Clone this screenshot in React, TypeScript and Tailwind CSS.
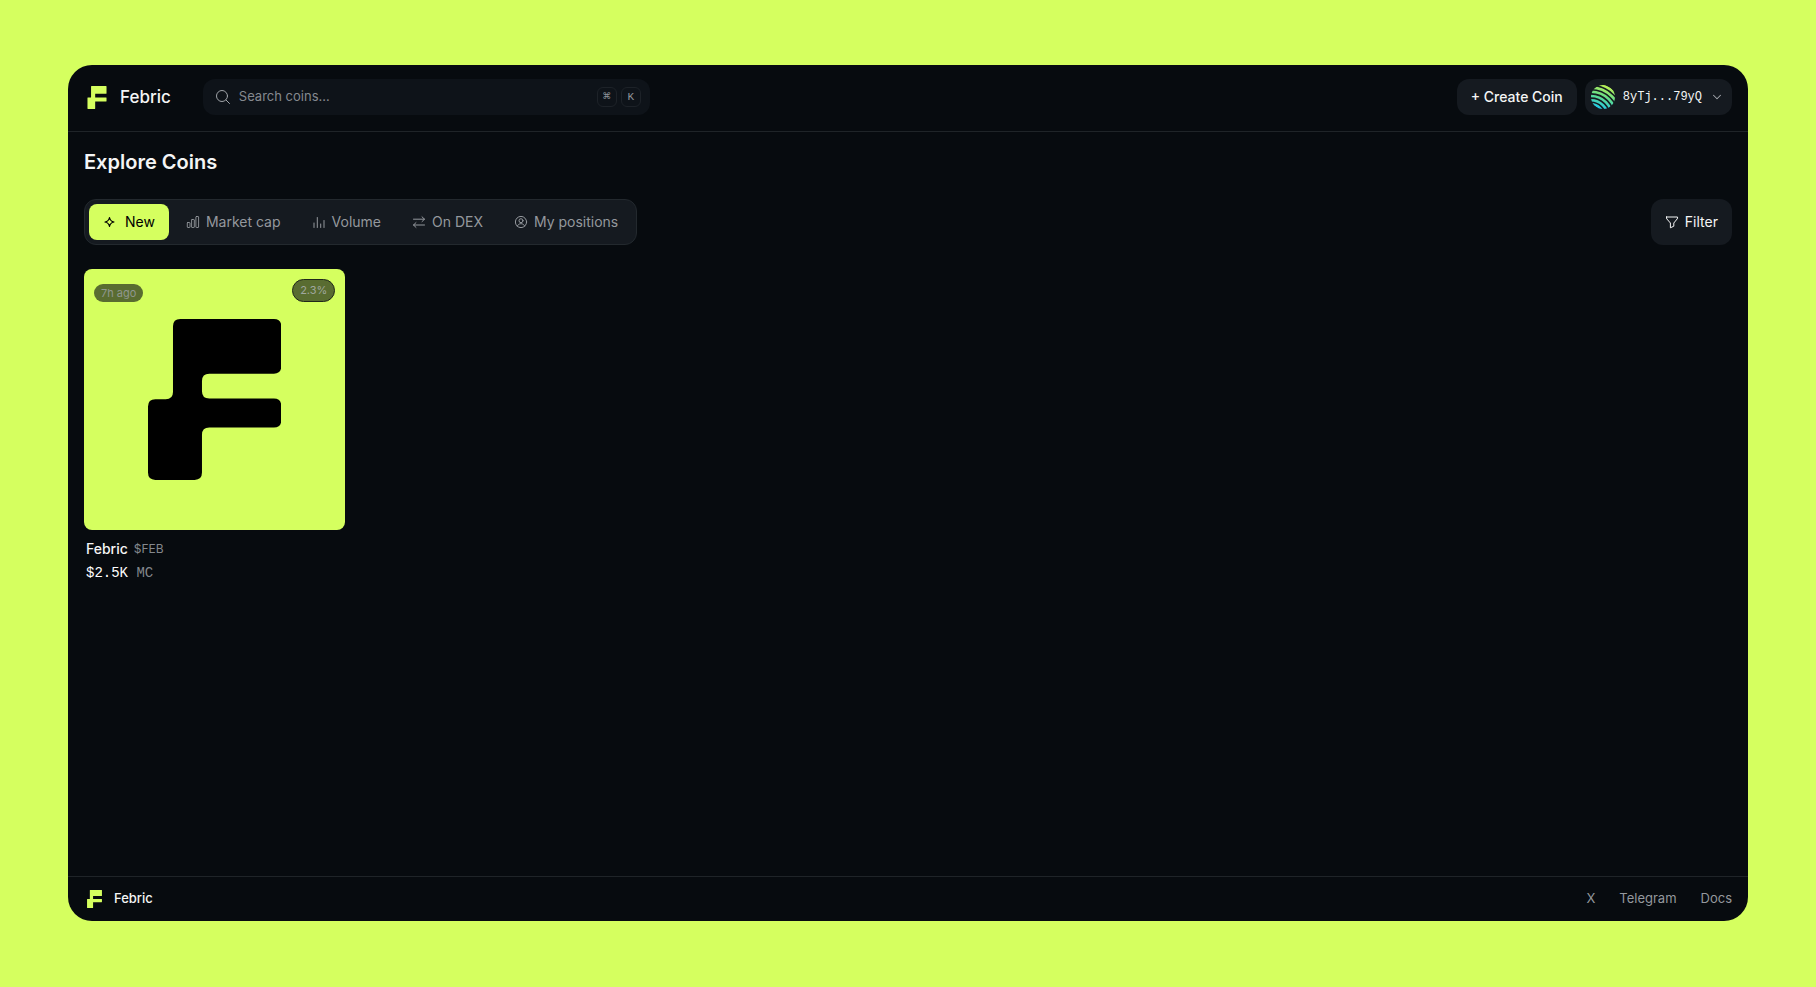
import { ReactNode } from 'react';
import { ChevronDown } from 'lucide-react';

const LOGO_PATH =
  'M97 0H378Q400 0 400 22V142Q400 164 378 164H184Q162 164 162 186V217Q162 239 184 239H378Q400 239 400 261V304Q400 326 378 326H184Q162 326 162 348V461Q162 483 140 483H22Q0 483 0 461V263Q0 241 22 241H53Q75 241 75 219V22Q75 0 97 0Z';

function Logo({ className }: { className: string }) {
  return (
    <svg viewBox="0 0 400 483" fill="currentColor" className={className} aria-hidden="true">
      <path d={LOGO_PATH} />
    </svg>
  );
}

// squarer cut of the mark for small sizes
function LogoMark({ className }: { className: string }) {
  return (
    <svg viewBox="0 0 400 483" fill="currentColor" className={className} aria-hidden="true">
      <path d="M83 0H392L400 8V156L392 164H162V239H392L400 247V318L392 326H162V475L154 483H8L0 475V249L8 241H75V8Z" />
    </svg>
  );
}

function Icon({ children }: { children: ReactNode }) {
  return (
    <svg
      viewBox="0 0 14 14"
      fill="none"
      stroke="currentColor"
      strokeLinecap="round"
      strokeLinejoin="round"
      className="h-3.5 w-3.5 shrink-0"
      aria-hidden="true"
    >
      {children}
    </svg>
  );
}

const tabs = [
  {
    label: 'New',
    icon: <path strokeWidth="1.2" d="M6.5 2.5Q7.2 6.3 11 7Q7.2 7.7 6.5 11.5Q5.8 7.7 2 7Q5.8 6.3 6.5 2.5Z" />,
  },
  {
    label: 'Market cap',
    icon: (
      <g strokeWidth="0.9">
        <rect x="1.3" y="7.5" width="2.7" height="5" rx="0.5" />
        <rect x="5.6" y="4.5" width="2.7" height="8" rx="0.5" />
        <rect x="9.9" y="1.5" width="2.7" height="11" rx="0.5" />
      </g>
    ),
  },
  {
    label: 'Volume',
    icon: <path strokeWidth="1" d="M2 8v4.5M5.3 2.5v10M8.7 9v3.5M12 5.5v7" />,
  },
  {
    label: 'On DEX',
    icon: <path strokeWidth="1" d="M1.5 4.2h11M10 1.8l2.5 2.4L10 6.6M12.5 10h-11M4 7.6L1.5 10L4 12.4" />,
  },
  {
    label: 'My positions',
    icon: (
      <g strokeWidth="1">
        <circle cx="7" cy="7" r="5.6" />
        <circle cx="7" cy="5.7" r="2" />
        <path d="M3.4 11.1C4 9.4 5.3 8.7 7 8.7s3 .7 3.6 2.4" />
      </g>
    ),
  },
];

const coins = [{ name: 'Febric', ticker: '$FEB', marketCap: '$2.5K', age: '7h ago', change: '2.3%' }];

const links = ['X', 'Telegram', 'Docs'];

function Avatar() {
  return (
    <svg viewBox="0 0 24 24" fill="none" className="h-6 w-6 shrink-0" aria-hidden="true">
      <defs>
        <linearGradient id="avatar" gradientUnits="userSpaceOnUse" x1="16" y1="0" x2="8" y2="24">
          <stop stopColor="#c4f24e" />
          <stop offset="0.5" stopColor="#62dc8a" />
          <stop offset="1" stopColor="#1cc8ee" />
        </linearGradient>
        <clipPath id="avatar-clip">
          <circle cx="12" cy="12" r="12" />
        </clipPath>
      </defs>
      <g clipPath="url(#avatar-clip)" stroke="url(#avatar)" strokeWidth="2.6">
        <circle cx="0" cy="32" r="12.6" />
        <circle cx="0" cy="32" r="16.8" />
        <circle cx="0" cy="32" r="21" />
        <circle cx="0" cy="32" r="25.2" />
        <circle cx="0" cy="32" r="29.4" />
        <circle cx="0" cy="32" r="33.6" />
      </g>
    </svg>
  );
}

function CoinCard({ coin }: { coin: (typeof coins)[number] }) {
  return (
    <article>
      <div className="relative flex aspect-square items-center justify-center rounded-lg bg-[#d5ff5f]">
        <Logo className="h-auto w-[51%] text-black" />
        <span className="absolute left-2.5 top-[15px] rounded-full bg-[#596c31] px-[7px] text-[11px] leading-[18px] text-[#90978f]">
          {coin.age}
        </span>
        <span className="absolute right-2.5 top-2.5 rounded-full border border-[#20281a] bg-[#596c31] px-[7px] text-[11px] leading-[21px] text-[#a0a79e]">
          {coin.change}
        </span>
      </div>
      <div className="px-0.5 pt-[9px]">
        <h2 className="flex items-center gap-1.5 text-sm leading-5 font-medium">
          {coin.name}
          <span className="text-xs leading-5 font-normal text-[#84888d]">{coin.ticker}</span>
        </h2>
        <p className="mt-1 font-['Liberation_Mono',monospace] text-sm leading-5 text-white">
          {coin.marketCap} <span className="text-[#84888d]">MC</span>
        </p>
      </div>
    </article>
  );
}

export default function App() {
  return (
    <div className="flex min-h-screen flex-col bg-[#d5ff5f] px-[68px] pt-[65px] pb-[66px] font-['Inter',sans-serif] text-[#f4f5f5]">
      <div className="flex flex-1 flex-col overflow-hidden rounded-3xl bg-[#070b0f]">
        <header className="flex items-center border-b border-[#1f2428] px-4 pt-3.5 pb-4">
          <a href="#" className="mr-8 flex items-center gap-[13px] pl-[3px] text-[17px] leading-6 font-medium">
            <LogoMark className="h-[23px] w-5 text-[#d5ff5f]" />
            Febric
          </a>
          <div className="flex h-9 w-full max-w-[447px] items-center gap-1 rounded-xl bg-[#0e1319] pr-[9px] pl-3">
            <svg viewBox="0 0 16 16" fill="none" stroke="#a0a4a9" strokeLinecap="round" className="h-4 w-4 shrink-0" aria-hidden="true">
              <circle cx="7" cy="7" r="5.5" />
              <path d="M11 11l3.5 3.5" />
            </svg>
            <input
              type="text"
              aria-label="Search coins"
              placeholder="Search coins…"
              className="min-w-0 flex-1 bg-transparent pl-1 text-[13px] outline-none placeholder:text-[#85898f]"
            />
            <kbd className="flex h-5 w-5 items-center justify-center rounded-md border border-[#1d2228] font-['DejaVu_Sans',sans-serif] text-[9px] text-[#92969b]">
              ⌘
            </kbd>
            <kbd className="flex h-5 w-5 items-center justify-center rounded-md border border-[#1d2228] font-['Liberation_Mono',monospace] text-[11px] text-[#92969b]">
              K
            </kbd>
          </div>
          <div className="ml-auto flex shrink-0 items-center gap-2">
            <button type="button" className="h-9 rounded-xl bg-[#151a20] px-3.5 text-sm font-medium">
              + Create Coin
            </button>
            <button type="button" className="flex h-9 items-center gap-2 rounded-xl bg-[#151a20] pr-2 pl-1.5">
              <Avatar />
              <span className="font-['Liberation_Mono',monospace] text-xs">8yTj...79yQ</span>
              <ChevronDown className="h-3.5 w-3.5 text-[#a5a9ae]" strokeWidth={1.75} />
            </button>
          </div>
        </header>

        <main className="flex-1 px-4 pt-4">
          <h1 className="text-xl leading-7 font-semibold">Explore Coins</h1>
          <div className="mt-[23px] flex items-center justify-between">
            <div className="flex gap-[3px] rounded-xl border border-[#23292e] bg-[#151a20] p-1">
              {tabs.map((tab, i) => (
                <button
                  key={tab.label}
                  type="button"
                  className={
                    i === 0
                      ? 'flex h-9 items-center gap-2 rounded-lg bg-[#d5ff5f] px-3.5 text-sm text-black'
                      : 'flex h-9 items-center gap-1.5 rounded-lg px-3.5 text-sm text-[#94989d]'
                  }
                >
                  <Icon>{tab.icon}</Icon>
                  {tab.label}
                </button>
              ))}
            </div>
            <button type="button" className="flex h-[46px] items-center gap-1.5 rounded-xl bg-[#151a20] px-3.5 text-sm">
              <Icon>
                <path d="M1.5 2h11q.4 1.2-.4 2L8.8 8v3.2L5.4 12.8V8L1.9 4Q1.2 3.2 1.5 2Z" />
              </Icon>
              Filter
            </button>
          </div>
          <div className="mt-6 grid grid-cols-6 gap-4">
            {coins.map((coin) => (
              <CoinCard key={coin.name} coin={coin} />
            ))}
          </div>
        </main>

        <footer className="flex h-[45px] items-center justify-between border-t border-[#1f2428] px-4">
          <a href="#" className="flex items-center gap-3 pl-[3px] text-[13px] font-medium">
            <LogoMark className="h-[18px] w-[15px] text-[#d5ff5f]" />
            Febric
          </a>
          <nav className="flex gap-6 text-[13px] text-[#94989d]">
            {links.map((link) => (
              <a key={link} href="#">
                {link}
              </a>
            ))}
          </nav>
        </footer>
      </div>
    </div>
  );
}
